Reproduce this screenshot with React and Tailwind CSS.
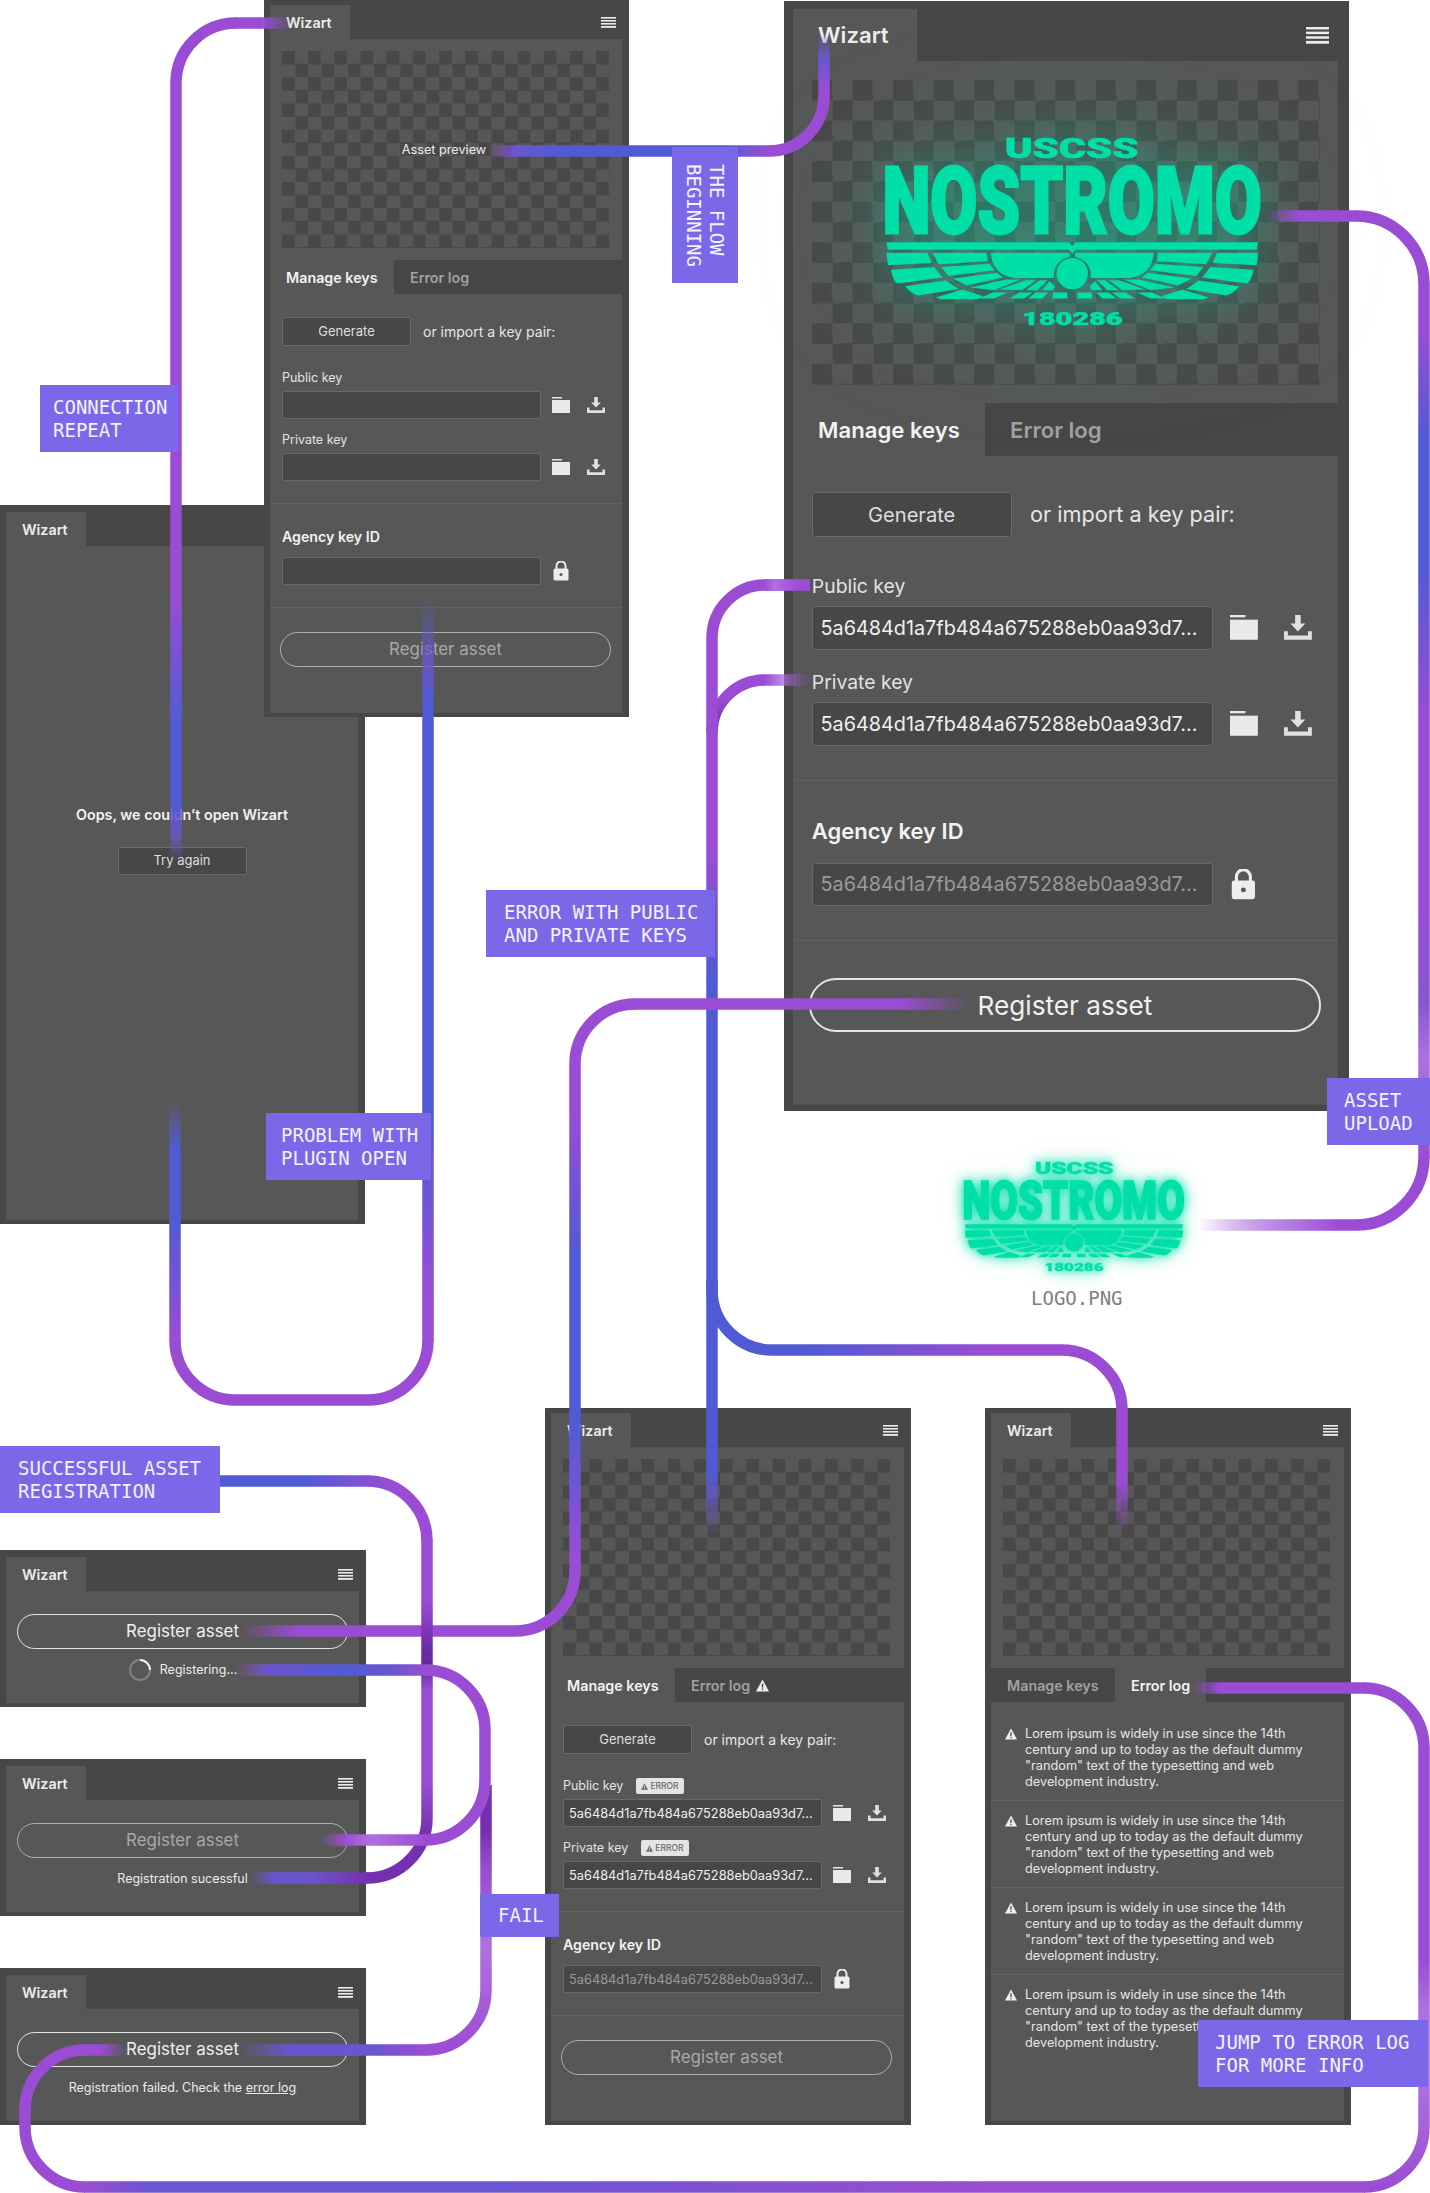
const P = "#9b4cd4";
const B = "#4f5bd5";
const D = "#7430b0";
const L = "#b070e0";
const M = "#6c55d0";

// each wire piece gets its own gradient along one axis, stops are [coordinate, colour, opacity]
const wires = [
  ["M 292 23 H 235", "x", [[292, P, 0], [262, P, 1], [235, P, 1]]],
  ["M 236 23 A 60 60 0 0 0 176 83 V 862", "y", [[23, P], [590, P], [730, B], [800, B], [835, M, 0.75], [862, M, 0]]],
  ["M 488 151 H 770", "x", [[488, P, 0], [515, M], [560, B], [720, B], [770, P]]],
  ["M 769 151 A 55 55 0 0 0 824 96 V 36", "y", [[151, P], [90, P], [60, M], [36, M, 0.1]]],
  ["M 1266 216 H 1357", "x", [[1266, P, 0], [1300, P], [1357, P]]],
  ["M 1356 216 A 68 68 0 0 1 1424 284 V 1157", "y", [[216, P], [330, P], [440, B], [560, B], [720, P], [900, P], [1000, "#8855d0"], [1060, L], [1157, P]]],
  ["M 1424 1156 V 1157 A 68 68 0 0 1 1356 1225 H 1199", "x", [[1424, P], [1340, P], [1280, "#b884e4"], [1199, P, 0]]],
  ["M 765 680 A 53 53 0 0 0 712 733", "y", [[680, P], [700, P], [733, "#6a2aa4"]]],
  ["M 810 680 H 764", "x", [[810, P, 0], [775, L], [764, P]]],
  ["M 810 585 H 765 A 53 53 0 0 0 712 638 V 700", "y", [[585, P], [700, P]], ["M 810 585 H 764", "x", [[810, P, 0], [775, L], [764, P]]]],
  ["M 712 699 V 1535", "y", [[699, P], [850, P], [980, B], [1470, B], [1505, M, 0.6], [1535, M, 0]]],
  ["M 712 1280 V 1290 A 60 60 0 0 0 772 1350 H 1062 A 60 60 0 0 1 1122 1410", "x", [[712, B], [800, B], [1000, P], [1122, P]]],
  ["M 1122 1409 V 1532", "y", [[1409, P], [1480, P], [1532, P, 0]]],
  ["M 428 597 V 1341", "y", [[597, B, 0], [660, M, 0.8], [700, B], [1120, B], [1300, P], [1341, P]]],
  ["M 428 1340 A 60 60 0 0 1 368 1400 H 235 A 60 60 0 0 1 175 1340", "x", [[428, P], [175, P]]],
  ["M 175 1341 V 1100", "y", [[1341, P], [1220, B], [1150, B], [1100, M, 0]]],
  ["M 970 1004 H 634", "x", [[970, P, 0], [900, P], [634, P]]],
  ["M 635 1004 A 60 60 0 0 0 575 1064 V 1572", "y", [[1004, P], [1110, P], [1260, B], [1420, B], [1560, P]]],
  ["M 575 1571 A 60 60 0 0 1 515 1631 H 240", "x", [[575, P], [300, P], [240, P, 0]]],
  ["M 220 1481 H 367 A 60 60 0 0 1 427 1541", "x", [[220, B], [300, B], [395, P], [427, P]]],
  ["M 427 1540 V 1818 A 60 60 0 0 1 367 1878", "y", [[1540, P], [1600, P], [1640, D], [1665, "#5f2a9a"], [1690, P], [1780, P], [1835, D], [1878, D]]],
  ["M 368 1878 H 250", "x", [[368, D], [310, M], [275, M], [250, M, 0]]],
  ["M 486 1785 V 1990 A 60 60 0 0 1 426 2050", "y", [[1785, D], [1830, D], [1870, P], [1950, L], [2050, P]]],
  ["M 427 2050 H 240", "x", [[427, P], [375, M], [290, M], [240, M, 0]]],
  ["M 235 1670 H 426", "x", [[235, P, 0], [270, M], [340, B], [395, M], [426, P]]],
  ["M 425 1670 A 60 60 0 0 1 485 1730 V 1780 A 60 60 0 0 1 425 1840", "y", [[1670, P], [1840, P]]],
  ["M 426 1840 H 320", "x", [[426, P], [370, L], [345, P], [320, P, 0]]],
  ["M 1191 1688 H 1365", "x", [[1191, P, 0], [1220, P], [1365, P]]],
  ["M 1364 1688 A 60 60 0 0 1 1424 1748 V 2127 A 60 60 0 0 1 1364 2187", "y", [[1688, P], [1960, P], [2010, L], [2080, L], [2187, P]]],
  ["M 1365 2187 H 84", "x", [[1365, P], [1000, P], [500, M], [150, M], [84, P]]],
  ["M 85 2187 A 60 60 0 0 1 25 2127 V 2110 A 60 60 0 0 1 85 2050", "y", [[2187, P], [2050, P]]],
  ["M 84 2050 H 126", "x", [[84, P], [100, P], [126, P, 0]]],
];

function Wires() {
  const pieces = wires.flatMap(([d, axis, stops, extra]) => (extra ? [[d, axis, stops], extra] : [[d, axis, stops]]));
  return (
    <svg className="absolute inset-0 z-10 pointer-events-none" width="1430" height="2193" fill="none">
      <defs>
        {pieces.map(([, axis, stops], i) => {
          const from = stops[0][0];
          const to = stops[stops.length - 1][0];
          return (
            <linearGradient
              key={i}
              id={`w${i}`}
              gradientUnits="userSpaceOnUse"
              x1={axis === "x" ? from : 0}
              x2={axis === "x" ? to : 0}
              y1={axis === "y" ? from : 0}
              y2={axis === "y" ? to : 0}
            >
              {stops.map(([c, color, op = 1], j) => (
                <stop key={j} offset={(c - from) / (to - from)} stopColor={color} stopOpacity={op} />
              ))}
            </linearGradient>
          );
        })}
      </defs>
      {pieces.map(([d], i) => (
        <path key={i} d={d} stroke={`url(#w${i})`} strokeWidth="11.5" />
      ))}
    </svg>
  );
}

function Label({ className, children }) {
  return (
    <div className={`absolute z-20 flex items-center bg-[#7b68e8] text-[#f4f2ff] text-[19px] leading-[23px] [font-family:'DejaVu_Sans_Mono',monospace] ${className}`}>
      <div>{children}</div>
    </div>
  );
}

function MenuIcon() {
  return (
    <svg width="15" height="11" viewBox="0 0 15 11" fill="#ececec">
      <rect y="0" width="15" height="1.6" />
      <rect y="3" width="15" height="1.6" />
      <rect y="6" width="15" height="1.6" />
      <rect y="9" width="15" height="1.8" />
    </svg>
  );
}

function FolderIcon() {
  return (
    <svg width="18" height="16" viewBox="0 0 18 16" fill="#e9e9e9" className="shrink-0">
      <rect x="0" y="0" width="10" height="1.5" />
      <rect x="0" y="3" width="18" height="13" />
    </svg>
  );
}

function DownloadIcon() {
  return (
    <svg width="18" height="16" viewBox="0 0 18 16" fill="#e0e0e0" className="shrink-0">
      <path d="M7.2 0h3.6v5.5h3L9 10.6 4.2 5.5h3z" />
      <path d="M0 10.5h2.5v2.7h13v-2.7H18V16H0z" />
    </svg>
  );
}

function LockIcon() {
  return (
    <svg width="16" height="20" viewBox="0 0 16 20" className="shrink-0">
      <path d="M3.5 8V5a4.5 4.5 0 0 1 9 0v3" fill="none" stroke="#ededed" strokeWidth="2" />
      <rect x="0.5" y="7.5" width="15" height="12" rx="1.5" fill="#ededed" />
      <circle cx="8" cy="13.5" r="1.6" fill="#585858" />
    </svg>
  );
}

function WarnIcon({ size = 12, fill = "#f0f0f0", mark = "#585858" }) {
  return (
    <svg width={size} height={size} viewBox="0 0 12 12" className="shrink-0">
      <path d="M6 0.5 L12 11.5 H0 Z" fill={fill} />
      <rect x="5.3" y="4.2" width="1.4" height="3.8" fill={mark} />
      <rect x="5.3" y="8.8" width="1.4" height="1.4" fill={mark} />
    </svg>
  );
}

function Frame({ className, bar = "h-[39px] pt-[5px]", menu = true, children }) {
  return (
    <div className={`absolute flex flex-col bg-[#474747] text-[#ececec] ${className}`}>
      <div className={`flex items-center justify-between shrink-0 ${bar}`}>
        <div className="ml-[6px] flex items-center self-stretch w-[80px] pl-[16px] pt-[1px] bg-[#575757] text-[14.3px] font-semibold">Wizart</div>
        {menu && (
          <div className="mr-[13px]">
            <MenuIcon />
          </div>
        )}
      </div>
      <div className="flex-1 min-h-0 flex flex-col ml-[6px] mr-[7px] mb-[4px] bg-[#575757]">{children}</div>
    </div>
  );
}

function Checker({ children }) {
  return (
    <div className="flex items-center justify-center w-[328px] h-[197px] bg-[repeating-conic-gradient(from_90deg,#484848_0_25%,transparent_0_50%)] bg-[size:26.2px_26.2px]">
      {children}
    </div>
  );
}

function Tabs({ active, warn }) {
  const keysOn = active === "keys";
  return (
    <div className="flex h-[34px] shrink-0 text-[14.3px] font-semibold">
      <div className={`flex items-center w-[124px] pl-[16px] pt-[1px] ${keysOn ? "text-[#f2f2f2]" : "bg-[#464646] text-[#a0a0a0]"}`}>Manage keys</div>
      <div className={`flex items-center gap-[6px] pl-[16px] pt-[1px] ${keysOn ? "flex-1 bg-[#464646] text-[#a0a0a0]" : "w-[91px] text-[#f2f2f2]"}`}>
        Error log
        {warn && <WarnIcon size={13} mark="#464646" />}
      </div>
      {!keysOn && <div className="flex-1 bg-[#464646]" />}
    </div>
  );
}

function ErrorBadge() {
  return (
    <span className="flex items-center gap-[2px] h-[16px] px-[5px] rounded-[2px] bg-[#e4e4e4] text-[#6a6a6a] text-[8.5px] font-medium">
      <WarnIcon size={7} fill="#6a6a6a" mark="#e4e4e4" />
      ERROR
    </span>
  );
}

function KeyField({ value, muted }) {
  return (
    <div className={`flex items-center w-[259px] h-[28px] px-[5px] pt-[1px] rounded-[2px] border border-[#696969] bg-[#474747] text-[12.8px] whitespace-nowrap overflow-hidden ${muted ? "text-[#9a9a9a]" : "text-[#f0f0f0]"}`}>
      {value}
    </div>
  );
}

function KeyRow({ label, value, error }) {
  return (
    <div>
      <div className="flex items-center h-[16px] mb-[5px] text-[12.5px] text-[#e2e2e2]">
        <span>{label}</span>
        {error && (
          <span className="ml-[13px]">
            <ErrorBadge />
          </span>
        )}
      </div>
      <div className="flex items-center">
        <KeyField value={value} />
        <div className="ml-[11px]">
          <FolderIcon />
        </div>
        <div className="ml-[17px]">
          <DownloadIcon />
        </div>
      </div>
    </div>
  );
}

function RegisterPill({ on, className }) {
  return (
    <div className={`flex items-center justify-center w-[331px] h-[35px] rounded-full border-[1.5px] text-[16.9px] ${on ? "border-[#e4e4e4] text-[#efefef]" : "border-[#adadad] text-[#a8a8a8]"} ${className}`}>
      Register asset
    </div>
  );
}

function KeysBody({ value, error, registerOn }) {
  return (
    <>
      <div className="px-[12px] pt-[23px] pb-[22px] border-b border-[#626262]">
        <div className="flex items-center">
          <div className="flex items-center justify-center w-[129px] h-[29px] pt-[1px] rounded-[2px] border border-[#6b6b6b] bg-[#474747] text-[13px] text-[#dedede]">Generate</div>
          <div className="ml-[12px] text-[14px] text-[#e6e6e6]">or import a key pair:</div>
        </div>
        <div className="mt-[24px]">
          <KeyRow label="Public key" value={value} error={error} />
        </div>
        <div className="mt-[13px]">
          <KeyRow label="Private key" value={value} error={error} />
        </div>
      </div>
      <div className="px-[12px] pt-[25px] pb-[22px] border-b border-[#626262]">
        <div className="h-[16px] mb-[12px] flex items-center text-[14.2px] font-semibold text-[#f2f2f2]">Agency key ID</div>
        <div className="flex items-center">
          <KeyField value={value} muted />
          <div className="ml-[12px]">
            <LockIcon />
          </div>
        </div>
      </div>
      <RegisterPill on={registerOn} className="ml-[10px] mt-[24px]" />
    </>
  );
}

function Preview({ children }) {
  return (
    <div className="h-[221px] shrink-0 pt-[12px] pl-[12px]">
      <Checker>{children}</Checker>
    </div>
  );
}

function Logo({ className }) {
  return (
    <div className={`flex flex-col items-center w-[242px] text-[#00dfa8] font-black [font-family:Roboto,sans-serif] ${className}`}>
      <div className="flex items-center justify-center h-[13px] text-[18px] leading-none scale-x-[1.5] [-webkit-text-stroke:0.4px_#00dfa8]">USCSS</div>
      <div className="flex items-center justify-center h-[44px] mt-[6px] text-[60px] leading-none scale-x-[0.735] [-webkit-text-stroke:1.8px_#00dfa8] whitespace-nowrap">NOSTROMO</div>
      <svg className="mt-[4px]" width="242" height="37" viewBox="20 335 1120 172" fill="#00dfa8">
        <path d="M22 336H570L580 346L590 336H1138L1134 358H590L580 370L570 358H26Z" />
        <circle cx="580" cy="430" r="47" />
        {[0, 1].map((side) => (
          <g key={side} transform={side ? "matrix(-1 0 0 1 1160 0)" : undefined}>
            <path d="M335 367H572V379A56 56 0 0 0 525 443H405Q340 432 335 367Z" />
            <path d="M22 367H145L158 398L26 405Z" />
            <path d="M35 418L165 410L190 442L55 460Q42 450 35 418Z" />
            <path d="M78 468L200 451L238 476L118 496Q95 490 78 468Z" />
            <path d="M170 502L250 478L312 498L295 507H185Z" />
            <path d="M160 367H322L327 393L178 402Z" />
            <path d="M186 410L330 400L347 420L208 437Z" />
            <path d="M222 445L353 427L372 442L262 466Z" />
            <path d="M274 472L380 448H425L345 480Z" />
            <path d="M360 478L440 450H470L430 480Z" />
            <path d="M440 480L482 450H505L475 480Z" />
            <path d="M300 505L340 487H385L345 505Z" />
            <path d="M392 505L420 487H462L435 505Z" />
            <path d="M448 505L470 487H508L490 505Z" />
            <path d="M520 505L522 487H565V505Z" />
            <path d="M490 480L512 452L528 470L520 480Z" />
          </g>
        ))}
      </svg>
      <div className="flex items-center justify-center h-[9px] mt-[8px] text-[12px] leading-none scale-x-[1.56] [-webkit-text-stroke:0.3px_#00dfa8]">180286</div>
    </div>
  );
}

function SmallPanel({ className, children }) {
  return (
    <Frame className={`left-0 w-[366px] h-[157px] ${className}`} bar="h-[41px] pt-[7px]">
      {children}
    </Frame>
  );
}

function StatusText({ children }) {
  return <div className="flex items-center justify-center h-[22px] mt-[10px] text-[12.5px] text-[#ececec]">{children}</div>;
}

const HASH = "5a6484d1a7fb484a675288eb0aa93d7...";
const LOREM = 'Lorem ipsum is widely in use since the 14th century and up to today as the default dummy "random" text of the typesetting and web development industry.';

export default function App() {
  return (
    <div className="relative w-[1430px] h-[2193px] overflow-hidden bg-white [font-family:Inter,sans-serif]">
      {/* failed to open */}
      <Frame className="left-0 top-[505px] w-[365px] h-[719px]" bar="h-[41px] pt-[7px]" menu={false}>
        <div className="flex flex-col items-center pt-[260px]">
          <div className="h-[18px] leading-[18px] text-[14.3px] font-semibold text-[#f2f2f2]">Oops, we couldn’t open Wizart</div>
          <div className="flex items-center justify-center w-[129px] h-[28px] mt-[23px] rounded-[2px] border border-[#6b6b6b] bg-[#474747] text-[13px] text-[#dedede]">Try again</div>
        </div>
      </Frame>

      {/* empty start state */}
      <Frame className="left-[264px] top-0 w-[365px] h-[717px]">
        <Preview>
          <span className="mr-[4px] text-[12.7px] text-[#ececec]">Asset preview</span>
        </Preview>
        <Tabs active="keys" />
        <KeysBody value="" />
      </Frame>

      {/* uploaded asset, drawn bigger */}
      <div className="absolute left-[784px] top-[1px]">
        <Frame className="w-[365px] h-[717px] [zoom:1.548]">
          <Preview>
            <Logo className="ml-[8px] [filter:drop-shadow(0_0_14px_rgba(0,223,168,0.35))_drop-shadow(0_0_40px_rgba(0,223,168,0.25))]" />
          </Preview>
          <Tabs active="keys" />
          <KeysBody value={HASH} registerOn />
        </Frame>
      </div>

      <div className="absolute left-[964px] top-[1163px]">
        <div className="[zoom:0.909]">
          <Logo className="[filter:drop-shadow(0_0_5px_rgba(0,223,168,0.9))_drop-shadow(0_0_9px_rgba(0,223,168,0.5))]" />
        </div>
      </div>
      <div className="absolute left-[1031px] top-[1287px] text-[19px] leading-[23px] text-[#808080] [font-family:'DejaVu_Sans_Mono',monospace]">LOGO.PNG</div>

      {/* errors on the keys */}
      <Frame className="left-[545px] top-[1408px] w-[366px] h-[717px]">
        <Preview />
        <Tabs active="keys" warn />
        <KeysBody value={HASH} error />
      </Frame>

      {/* error log */}
      <Frame className="left-[985px] top-[1408px] w-[366px] h-[717px]">
        <Preview />
        <Tabs active="log" />
        <div className="pt-[12px]">
          {[0, 1, 2, 3].map((i) => (
            <div key={i} className={`flex gap-[8px] pl-[14px] pr-[26px] pt-[12px] pb-[10px] ${i < 3 ? "border-b border-[#626262]" : ""}`}>
              <div className="pt-[2px]">
                <WarnIcon />
              </div>
              <p className="text-[12.75px] leading-[16px] text-[#e6e6e6]">{LOREM}</p>
            </div>
          ))}
        </div>
      </Frame>

      <SmallPanel className="top-[1550px]">
        <RegisterPill on className="ml-[11px] mt-[23px]" />
        <StatusText>
          <svg className="mr-[8px]" width="24" height="24" viewBox="0 0 24 24" fill="none">
            <circle cx="12" cy="12" r="10" stroke="#808080" strokeWidth="2" />
            <path d="M12 2a10 10 0 0 1 10 10" stroke="#f0f0f0" strokeWidth="2" />
          </svg>
          Registering...
        </StatusText>
      </SmallPanel>

      <SmallPanel className="top-[1759px]">
        <RegisterPill className="ml-[11px] mt-[23px]" />
        <StatusText>Registration sucessful</StatusText>
      </SmallPanel>

      <SmallPanel className="top-[1968px]">
        <RegisterPill on className="ml-[11px] mt-[23px]" />
        <StatusText>
          Registration failed. Check the&nbsp;<span className="underline">error log</span>
        </StatusText>
      </SmallPanel>

      <Wires />

      <Label className="left-[40px] top-[385px] w-[138px] h-[67px] pl-[13px]">CONNECTION<br />REPEAT</Label>
      <Label className="left-[672px] top-[147px] w-[66px] h-[136px] justify-center [writing-mode:vertical-rl]">THE FLOW<br />BEGINNING</Label>
      <Label className="left-[486px] top-[890px] w-[229px] h-[67px] pl-[18px]">ERROR WITH PUBLIC<br />AND PRIVATE KEYS</Label>
      <Label className="left-[266px] top-[1113px] w-[165px] h-[67px] pl-[15px]">PROBLEM WITH<br />PLUGIN OPEN</Label>
      <Label className="left-[1327px] top-[1078px] w-[103px] h-[67px] pl-[17px]">ASSET<br />UPLOAD</Label>
      <Label className="left-0 top-[1446px] w-[220px] h-[67px] pl-[18px]">SUCCESSFUL ASSET<br />REGISTRATION</Label>
      <Label className="left-[480px] top-[1894px] w-[79px] h-[43px] pl-[18px]">FAIL</Label>
      <Label className="left-[1198px] top-[2020px] w-[230px] h-[67px] pl-[17px]">JUMP TO ERROR LOG<br />FOR MORE INFO</Label>
    </div>
  );
}
